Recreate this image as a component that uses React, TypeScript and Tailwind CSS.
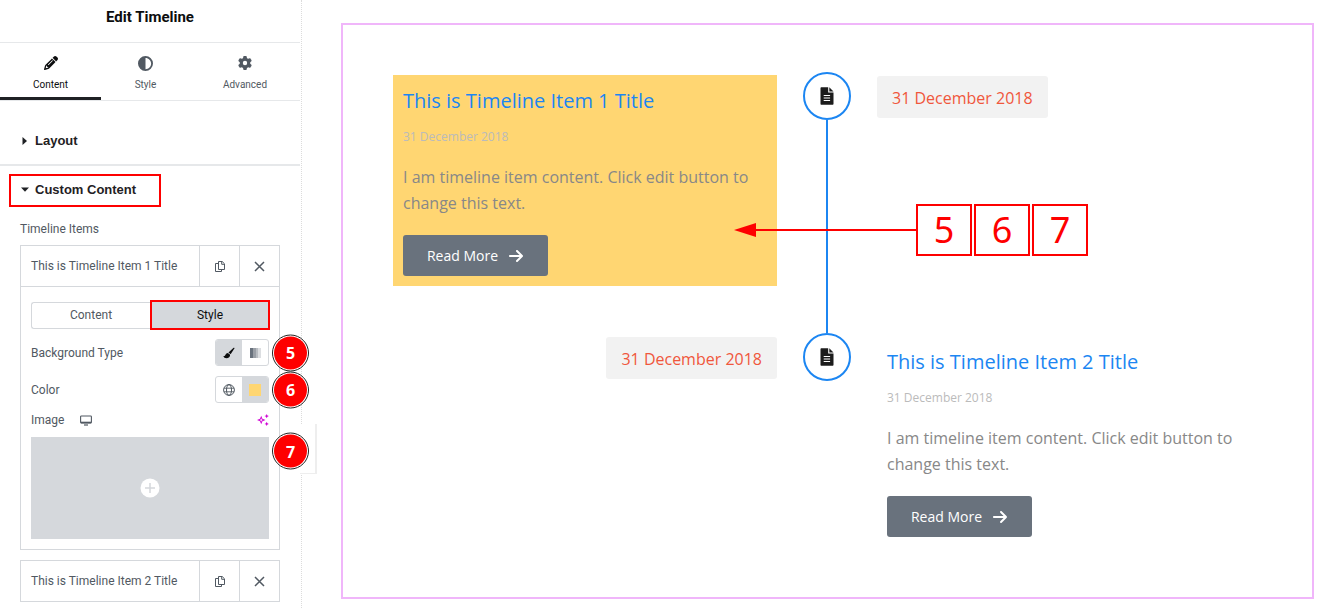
import { useState } from 'react';
import { clsx } from 'clsx';
import { FaArrowRight, FaCircleHalfStroke, FaGear, FaPencil } from 'react-icons/fa6';

const timelineItems = [
  { id: 1, title: 'This is Timeline Item 1 Title', highlighted: true },
  { id: 2, title: 'This is Timeline Item 2 Title', highlighted: false },
];

const steps = [5, 6, 7];

/* Icons */

function CopyIcon() {
  return (
    <svg viewBox="0 0 12 13" className="w-3 h-[13px]" fill="none" stroke="currentColor" strokeWidth="1">
      <path d="M4.5 1.500h3.700l2.300 2.300v5.700h-6Z" />
      <path d="M7.700 1.500v2.800h2.800" />
      <path d="M4.500 3.500H1.500v8h6V9.500" />
    </svg>
  );
}

function CloseIcon() {
  return (
    <svg viewBox="0 0 11 11" className="size-[11px]" fill="none" stroke="currentColor" strokeWidth="1.500">
      <path d="M1 1l9 9M10 1L1 10" />
    </svg>
  );
}

function BrushIcon() {
  return (
    <svg viewBox="0 0 12 12" className="w-3 h-3" fill="currentColor">
      <path d="M10.6.8c.5-.3 1.1.1.8.7L7.600 7.200 5.500 5.400Z" />
      <path d="M4.900 5.900 7.100 7.800C7.200 10 5.600 11.200 3.500 11.200 1.800 11.200.8 10.200.4 8.900c1 .3 1.600 0 2.100-1.200.5-1.100 1.300-1.700 2.400-1.800Z" />
    </svg>
  );
}

function GradientIcon() {
  return (
    <svg viewBox="0 0 11 10" className="w-[11px] h-2.5">
      <rect width="3" height="10" fill="#69727d" />
      <rect x="3" width="3" height="10" fill="#9a9fa6" />
      <rect x="6" width="2" height="10" fill="#b9bdc2" />
      <rect x="8" width="3" height="10" fill="#dcdee1" />
    </svg>
  );
}

function GlobeIcon() {
  return (
    <svg viewBox="0 0 12 12" className="w-3 h-3" fill="none" stroke="currentColor">
      <circle cx="6" cy="6" r="5.400" />
      <ellipse cx="6" cy="6" rx="2.500" ry="5.400" />
      <path d="M1 4.200h10M1 7.800h10" strokeWidth=".9" />
    </svg>
  );
}

function MonitorIcon() {
  return (
    <svg viewBox="0 0 12 11" className="w-3 h-[11px]" fill="none" stroke="currentColor">
      <rect x=".6" y="1" width="10.800" height="7" rx=".8" strokeWidth="1.100" />
      <path d="M1 7.500h10" strokeWidth="1.600" />
      <path d="M4 10h4" strokeWidth="1.200" />
    </svg>
  );
}

function SparkleIcon() {
  return (
    <svg viewBox="0 0 12 12" className="w-3 h-3" fill="#d004d4">
      <path
        fillRule="evenodd"
        d="M4.200 1.700 5.400 4.800 8.500 6 5.400 7.200 4.200 10.300 3 7.200 0 6 3 4.800ZM4.200 4.300 3.700 5.500 2.500 6 3.700 6.500 4.200 7.700 4.700 6.500 5.900 6 4.700 5.500Z"
      />
      <path d="M9.700 0l.7 1.500 1.500.6-1.500.6-.7 1.500-.7-1.500-1.500-.6 1.500-.6ZM9.700 7.800l.7 1.500 1.500.6-1.500.6-.7 1.500-.7-1.500-1.500-.6 1.500-.6Z" />
    </svg>
  );
}

function FileIcon() {
  return (
    <svg viewBox="0 0 14 18" className="w-3.5 h-[18px]">
      <path d="M.5 1.200C.5.500.9.200 1.500.2h6.700v5.300h5.300v11.300c0 .6-.4 1-1 1h-11c-.6 0-1-.4-1-1Z" fill="#1c1c1c" />
      <path d="M9.300.2l4.200 4.200H9.300Z" fill="#1c1c1c" />
      <path d="M3.700 8.500h6.400M3.700 11h6.400M3.700 13.500h6.400" stroke="#fff" strokeWidth="1.100" />
    </svg>
  );
}

/* Editor panel */

function StepBadge({ step }: { step: number }) {
  return (
    <span className="absolute left-full top-1/2 -translate-y-1/2 ml-[3px] z-10 flex size-[37px] items-center justify-center rounded-full border border-[#222] bg-white p-px">
      <span className="flex size-full items-center justify-center rounded-full bg-[#fe0000] font-['Open_Sans',sans-serif] text-base font-bold text-white">
        {step}
      </span>
    </span>
  );
}

function ItemHeader({ title }: { title: string }) {
  return (
    <div className="flex h-10 items-stretch">
      <button className="flex-1 px-2.5 text-left">{title}</button>
      <button aria-label="Duplicate" className="flex w-10 items-center justify-center border-l border-[#d5d8dc]">
        <CopyIcon />
      </button>
      <button aria-label="Remove" className="flex w-10 items-center justify-center border-l border-[#d5d8dc]">
        <CloseIcon />
      </button>
    </div>
  );
}

function EditorPanel() {
  const [activeTab, setActiveTab] = useState('Content');

  const tabs = [
    { label: 'Content', icon: <FaPencil className="size-3.5" /> },
    { label: 'Style', icon: <FaCircleHalfStroke className="size-[15px]" /> },
    { label: 'Advanced', icon: <FaGear className="size-3.5" /> },
  ];

  return (
    <aside className="relative w-[302px] shrink-0 border-r border-dotted border-[#dcdcdc] pr-px font-[Roboto,sans-serif] text-xs text-[#515962]">
      <h1 className="flex h-[43px] items-center justify-center border-b border-[#e6e8ea] pb-1.5 text-[15px] font-bold text-[#0c0d0e]">
        Edit Timeline
      </h1>

      <nav className="grid h-[58px] grid-cols-[101fr_89fr_110fr] border-b border-[#e6e8ea]">
        {tabs.map(({ label, icon }) => (
          <button
            key={label}
            onClick={() => setActiveTab(label)}
            className={clsx(
              'flex flex-col items-center gap-1.5 border-b-3 pt-3 text-[10px] leading-4',
              activeTab === label ? 'border-[#1f2124] text-[#0c0d0e]' : 'border-transparent text-[#515962]'
            )}
          >
            <span className="flex h-4 items-center">{icon}</span>
            {label}
          </button>
        ))}
      </nav>

      <button className="flex w-full items-center gap-2 border-b-2 border-[#e6e8ea] pt-[29px] pb-[13px] pl-[22px] font-['Liberation_Sans',sans-serif] text-[13px] leading-[21px] font-bold text-[#1f2124]">
        <svg viewBox="0 0 5 8" className="w-[5px] h-2">
          <path d="M.5 0v8l4.500-4Z" fill="currentColor" />
        </svg>
        Layout
      </button>

      <button className="mt-2 ml-[9px] flex h-[33px] w-38 items-center gap-1.5 border-2 border-[#fe0000] pl-2.5 pb-0.5 font-['Liberation_Sans',sans-serif] text-[13px] font-bold text-[#1f2124]">
        <svg viewBox="0 0 8 5" className="w-2 h-[5px]">
          <path d="M0 .5h8L4 4.800Z" fill="currentColor" />
        </svg>
        Custom Content
      </button>

      <div className="px-5 pt-3">
        <p className="leading-5">Timeline Items</p>

        <section className="mt-1.5 border border-[#d5d8dc]">
          <ItemHeader title={timelineItems[0].title} />
          <div className="border-t border-[#d5d8dc] px-2.5 pt-[13px] pb-2.5">
            <div className="-mr-px flex h-[30px] items-center">
              <button className="h-[27px] flex-1 rounded-l-[3px] border border-r-0 border-[#d5d8dc]">Content</button>
              <button className="h-[30px] w-30 border-2 border-[#fe0000] bg-[#d5d8dc] text-[#0c0d0e]">Style</button>
            </div>

            <div className="relative mt-[9px] flex h-[27px] items-center justify-between">
              Background Type
              <div className="flex h-full w-[54px] overflow-hidden rounded-[3px] border border-[#d5d8dc]">
                <button aria-label="Classic" className="flex flex-1 items-center justify-center bg-[#d5d8dc] text-[#0c0d0e]">
                  <BrushIcon />
                </button>
                <button aria-label="Gradient" className="flex flex-1 items-center justify-center">
                  <GradientIcon />
                </button>
              </div>
              <StepBadge step={5} />
            </div>

            <div className="relative mt-2.5 flex h-[27px] items-center justify-between">
              Color
              <div className="flex h-full w-[54px] overflow-hidden rounded-[3px] border border-[#d5d8dc]">
                <button aria-label="Global colors" className="flex flex-1 items-center justify-center">
                  <GlobeIcon />
                </button>
                <button aria-label="Pick color" className="flex flex-1 items-center justify-center bg-[#d5d8dc]">
                  <span className="size-3 bg-[#ffd672]" />
                </button>
              </div>
              <StepBadge step={6} />
            </div>

            <div className="mt-[7px] flex h-5 items-center">
              Image
              <button aria-label="Responsive mode" className="ml-4">
                <MonitorIcon />
              </button>
              <button aria-label="Edit with AI" className="ml-auto">
                <SparkleIcon />
              </button>
            </div>

            <div className="relative mt-[7px]">
              <button aria-label="Choose image" className="flex h-[102px] w-full items-center justify-center bg-[#d5d8dc]">
                <svg viewBox="0 0 20 20" className="size-5">
                  <circle cx="10" cy="10" r="9.500" fill="#fff" />
                  <path d="M10 5v10M5 10h10" stroke="#d5d8dc" strokeWidth="1.500" />
                </svg>
              </button>
              <div className="absolute top-[14px] left-full">
                <StepBadge step={7} />
              </div>
            </div>
          </div>
        </section>

        <section className="mt-2.5 mb-1.5 border border-[#d5d8dc]">
          <ItemHeader title={timelineItems[1].title} />
        </section>
      </div>

      <button
        aria-label="Collapse panel"
        className="absolute top-[424px] -right-4 h-[50px] w-[17px] border-r-2 border-b border-[#eee] bg-white"
      />
    </aside>
  );
}

/* Preview */

function TimelineCard({ title, highlighted }: { title: string; highlighted: boolean }) {
  return (
    <article className={clsx('p-2.5', highlighted && 'bg-[#ffd672]')}>
      <h2 className="text-xl leading-8 font-normal text-[#1c86f2]">{title}</h2>
      <p className="mt-2.5 text-xs leading-5 text-[#bbbbbb]">31 December 2018</p>
      <p className="mt-[17px] text-base leading-[26px] text-[#888888]">
        I am timeline item content. Click edit button to change this text.
      </p>
      <a
        href="#"
        className="mt-[19px] inline-flex h-[41px] w-[145px] items-center justify-center gap-2.5 rounded-[3px] bg-[#69727d] text-sm text-white align-top"
      >
        Read More
        <FaArrowRight className="size-4" />
      </a>
    </article>
  );
}

function TimelineDate() {
  return (
    <time className="mt-px flex h-[42px] items-center rounded-[3px] bg-[#f2f2f2] px-[15px] pt-0.5 text-base text-[#f0573c]">
      31 December 2018
    </time>
  );
}

function StepPointer() {
  return (
    <div className="absolute top-[129px] -left-[43px] z-10 flex items-center">
      <svg viewBox="0 0 182 14" className="w-[182px] h-3.5">
        <path d="M0 7 22 0v14Z" fill="#fe0000" />
        <path d="M20 7h162" stroke="#fe0000" strokeWidth="2" />
      </svg>
      <div className="flex gap-0.5">
        {steps.map(step => (
          <span
            key={step}
            className="flex h-[52px] w-14 items-center justify-center border-2 border-[#fe0000] font-['Noto_Sans',sans-serif] text-4xl text-[#fe0000]"
          >
            {step}
          </span>
        ))}
      </div>
    </div>
  );
}

function Preview() {
  return (
    <main className="min-w-0 flex-1 pt-[23px] pr-[5px] pb-2 pl-[39px] font-['Open_Sans',sans-serif]">
      <div className="border-2 border-[#f0b6fa] p-[50px]">
        {timelineItems.map((item, index) => {
          const isLast = index === timelineItems.length - 1;
          const card = <TimelineCard title={item.title} highlighted={item.highlighted} />;
          return (
            <div key={item.id} className={clsx('grid grid-cols-[384fr_100px_385fr]', !isLast && 'min-h-[261px]')}>
              <div className="flex flex-col">
                {item.highlighted ? card : <div className="flex justify-end"><TimelineDate /></div>}
              </div>
              <div className="relative flex flex-col items-center">
                <span className="-mt-[3px] flex size-12 shrink-0 items-center justify-center rounded-full border-2 border-[#1c86f2]">
                  <FileIcon />
                </span>
                {!isLast && <span className="mb-[3px] w-0.5 flex-1 bg-[#1c86f2]" />}
                {item.highlighted && <StepPointer />}
              </div>
              <div className="flex flex-col">
                {item.highlighted ? <div className="flex"><TimelineDate /></div> : card}
              </div>
            </div>
          );
        })}
      </div>
    </main>
  );
}

export default function App() {
  return (
    <div className="flex min-h-screen bg-white">
      <EditorPanel />
      <Preview />
    </div>
  );
}
